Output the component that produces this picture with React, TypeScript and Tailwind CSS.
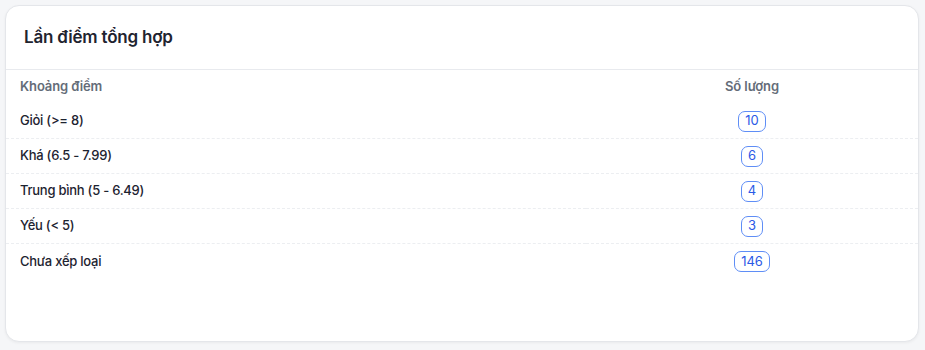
import React from "react";

const rows = [
  { label: "Giỏi (>= 8)", count: 10 },
  { label: "Khá (6.5 - 7.99)", count: 6 },
  { label: "Trung bình (5 - 6.49)", count: 4 },
  { label: "Yếu (< 5)", count: 3 },
  { label: "Chưa xếp loại", count: 146 },
];

export default function App() {
  return (
    <div
      className="w-[925px] h-[350px] bg-[#f5f6f8] p-[5px] pr-[6px] pb-[8px]"
      style={{ fontFamily: "Inter, 'Noto Sans', sans-serif" }}
    >
      <div className="h-full bg-white rounded-[14px] border border-[#e4e6ea] shadow-[0_1px_3px_rgba(0,0,0,0.05)] overflow-hidden">
        <div className="h-[64px] flex items-center px-[18px] border-b border-[#e8eaee]">
          <h2 className="text-[17px] font-semibold text-[#1f2430] tracking-[-0.2px]">Lần điểm tổng hợp</h2>
        </div>
        <div className="grid grid-cols-[1fr_332px]">
          <div className="h-[34px] flex items-center px-[14px] text-[13px] font-semibold text-[#646c78] tracking-[-0.1px]">Khoảng điểm</div>
          <div className="h-[34px] flex items-center justify-center text-[13px] font-semibold text-[#646c78] tracking-[-0.1px]">Số lượng</div>
          {rows.map((r, i) => {
            const border = i < rows.length - 1 ? "border-b border-dashed border-[#eceef1]" : "";
            return (
              <React.Fragment key={r.label}>
                <div className={`h-[35px] flex items-center px-[14px] text-[13px] font-medium text-[#1d2330] tracking-[-0.25px] ${border}`}>{r.label}</div>
                <div className={`h-[35px] flex items-center justify-center ${border}`}>
                  <span className="h-[21px] min-w-[22px] px-[6px] flex items-center justify-center rounded-[7px] border border-[#5f8ef6] text-[13px] text-[#2b5ae6]">
                    {r.count}
                  </span>
                </div>
              </React.Fragment>
            );
          })}
        </div>
      </div>
    </div>
  );
}
